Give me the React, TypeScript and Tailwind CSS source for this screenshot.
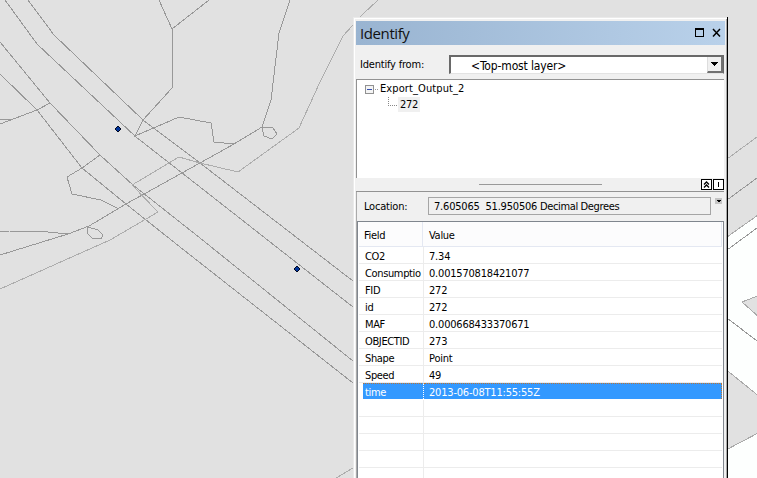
import type { ReactNode } from "react";

const rows: [string, string][] = [
  ["CO2", "7.34"],
  ["Consumptio", "0.001570818421077"],
  ["FID", "272"],
  ["id", "272"],
  ["MAF", "0.000668433370671"],
  ["OBJECTID", "273"],
  ["Shape", "Point"],
  ["Speed", "49"],
];

const roads = [
  "5,0 37,44 136,137 200,187 353,307",
  "28,0 54,35 143,120 200,163 353,281",
  "0,42 50,103 100,155 133,185 200,238 353,361",
  "0,74 37,110 82,168 126,204 180,247 353,383",
  "0,119 10,119",
  "0,124 37,110 50,103",
  "159,0 172,29 172,88 143,120 135,136 179,117 211,123 214,142 234,144",
  "172,29 209,0",
  "290,0 279,33 271,100 262,127 234,144 200,163 126,204 89,226 68,234 0,255",
  "262,127 273,128 277,134 272,139 264,136 262,127",
  "88,227 98,230 103,235 101,239 92,238 87,233 88,227",
  "0,231 9,231 48,232 68,234",
  "100,155 82,168 67,177 72,194 101,200 117,208",
  "727,200 757,178",
  "727,250 757,228",
  "727,318 757,341",
];

const paths = [
  "378,0 363,14 343,36 320,82 299,128 238,172 200,163 179,157 132,185 158,212 110,240 0,289",
  "336,478 353,468",
  "727,159 757,137",
];

function Map() {
  return (
    <svg className="absolute inset-0" width="757" height="478" fill="none" strokeWidth="1" shapeRendering="crispEdges">
      <path d="M727 237L758 215V479H727Z" fill="#fdfffe" />
      <g fill="#e1e1e1" stroke="#aaa">
        <path d="M742 302L760 295V318Z" />
        <path d="M724 368L760 397V432L724 451Z" />
      </g>
      <path d="M727 237L758 215" stroke="#aaa" />
      <g stroke="#989898">
        {roads.map((p) => <polyline key={p} points={p} />)}
      </g>
      <g stroke="#adadad">
        {paths.map((p) => <polyline key={p} points={p} />)}
      </g>
      <g fill="#003399" stroke="#000820">
        <path d="M118 126L121 129L118 132L115 129Z" />
        <path d="M297 266L300 269L297 272L294 269Z" />
      </g>
    </svg>
  );
}

function Row({ name, value }: { name: ReactNode; value: ReactNode }) {
  return (
    <div className="flex h-[17px] border-b border-[#ececec] leading-[20px]">
      <div className="w-[65px] shrink-0 whitespace-nowrap border-r border-[#ececec] pl-[6px] tracking-[-0.36px]">{name}</div>
      <div className="whitespace-nowrap pl-[5px] tracking-[-0.2px]">{value}</div>
    </div>
  );
}

export default function App() {
  return (
    <div className="relative h-[478px] w-[757px] overflow-hidden bg-[#e1e1e1]">
      <Map />
      <section className="absolute left-[353px] top-[17px] flex h-[470px] w-[375px] flex-col border-r border-black bg-[#f0f0f0] font-['DejaVu_Sans_Condensed','DejaVu_Sans',sans-serif] text-[11px] tracking-[-0.3px] text-black shadow-[inset_1px_1px_0_#eaeaea,inset_2px_2px_0_#fff,inset_-1px_0_0_#a8a8a8]">
        <header className="ml-[3px] mr-[2px] mt-[4px] flex h-[24px] shrink-0 items-center bg-linear-to-r from-[#99b4d1] to-[#b9d1ea] pl-[4px] pr-[4px]">
          <h1 className="grow font-['Open_Sans',sans-serif] text-[15px] leading-[24px] tracking-[-0.4px] text-[#111]">Identify</h1>
          <svg width="26" height="10" fill="none" stroke="#000" shapeRendering="crispEdges">
            <path d="M0 1H9" strokeWidth="2" />
            <path d="M.5 1V8.500H8.500V1" />
            <path d="M18 1L25 8.500M25 1L18 8.500" strokeWidth="1.500" shapeRendering="auto" />
          </svg>
        </header>

        <div className="flex h-[34px] shrink-0 pl-[7px] pr-[3px] pt-[10px]">
          <span className="w-[89px] leading-[19px] tracking-[-0.2px]">Identify from:</span>
          <div className="flex h-[19px] grow border-b border-l-2 border-r border-t-2 border-[#696969] border-b-[#e3e3e3] bg-white">
            <span className="grow pl-[20px] text-[12px] leading-[18px] tracking-[-0.14px]">&lt;Top-most layer&gt;</span>
            <div className="flex h-[16px] w-[16px] items-center justify-center border-b-2 border-r-2 border-[#707070] border-l border-l-[#ddd] bg-[#f0f0f0]">
              <svg width="7" height="4" shapeRendering="crispEdges"><path d="M0 0H7L3.500 4Z" /></svg>
            </div>
          </div>
        </div>

        <div className="ml-[3px] mr-[3px] flex h-[99px] shrink-0 flex-col border-l border-t border-[#929292] bg-white pl-[8px] pt-[1px]">
          <div className="flex h-[16px] items-center">
            <svg width="13" height="9" fill="none" shapeRendering="crispEdges">
              <rect x=".5" y=".5" width="8" height="8" fill="#f4f4f4" stroke="#919191" />
              <path d="M2 4.500H7" stroke="#3650b0" />
              <path d="M10 4.500H13" stroke="#999" strokeDasharray="1 1" />
            </svg>
            <span className="pl-[2px] tracking-[0.1px]">Export_Output_2</span>
          </div>
          <div className="flex h-[16px] items-start pl-[23px]">
            <svg width="9" height="10" fill="none" stroke="#888" strokeDasharray="1 1" shapeRendering="crispEdges"><path d="M.5 0V8.500H9" /></svg>
            <span className="ml-[1px] h-[15px] bg-[#f0f0f0] px-[2px] leading-[15px]">272</span>
          </div>
        </div>

        <div className="flex h-[13px] shrink-0 items-start pr-[3px]">
          <div className="ml-[126px] mt-[6px] h-px w-[123px] bg-[#999]" />
          <svg className="ml-auto mt-px" width="23" height="11" fill="none" stroke="#000" shapeRendering="crispEdges">
            <rect x=".5" y=".5" width="10" height="10" fill="#fff" />
            <rect x="12.500" y=".5" width="10" height="10" fill="#fff" />
            <path d="M17.500 3V8" />
            <path d="M3 5.500L5.500 3L8 5.500M3 8.500L5.500 6L8 8.500" strokeWidth="1.300" shapeRendering="auto" />
          </svg>
        </div>

        <div className="ml-[3px] mr-[3px] flex grow flex-col border-t border-[#929292] shadow-[inset_1px_0_0_#aaa]">
          <div className="flex h-[29px] shrink-0 pl-[8px] pt-[5px]">
            <span className="w-[64px] leading-[19px] tracking-[-0.2px]">Location:</span>
            <div className="h-[18px] w-[283px] whitespace-pre border border-[#a5a5a5] pl-[5px] leading-[17px] tracking-[-0.2px]">7.605065  51.950506<span className="tracking-[-0.36px]"> Decimal Degrees</span></div>
            <svg className="ml-[4px] mt-[1px]" width="7" height="6" shapeRendering="crispEdges">
              <rect width="7" height="6" fill="#c5c5c5" /><path d="M2 2H6L4 5Z" />
            </svg>
          </div>
          <div className="ml-[1px] flex grow flex-col border-l border-r border-t border-[#80868e] bg-white pl-[1px] pr-[1px]">
            <div className="flex h-[25px] shrink-0 border-b border-r border-[#e4e8f2] bg-[#fcfcfd] leading-[27px]">
              <div className="w-[64px] border-r border-[#e4e8f2] pl-[5px]">Field</div>
              <div className="pl-[6px]">Value</div>
            </div>
            {rows.map(([n, v]) => <Row key={n} name={n} value={v} />)}
            <div className="ml-[4px] flex h-[17px] shrink-0 border-b border-white bg-[#3399ff] bg-clip-padding leading-[19px] text-white">
              <div className="w-[61px] border-r border-t border-dotted border-r-white border-t-[#bd7432] pl-[2px] leading-[17px]">time</div>
              <div className="grow border-r border-t border-dotted border-[#bd7432] pl-[5px] leading-[17px] tracking-[-0.2px]">2013-06-08T11:55:55Z</div>
            </div>
            {[0, 1, 2, 3, 4].map((i) => <Row key={i} name="" value="" />)}
          </div>
        </div>
      </section>
    </div>
  );
}
